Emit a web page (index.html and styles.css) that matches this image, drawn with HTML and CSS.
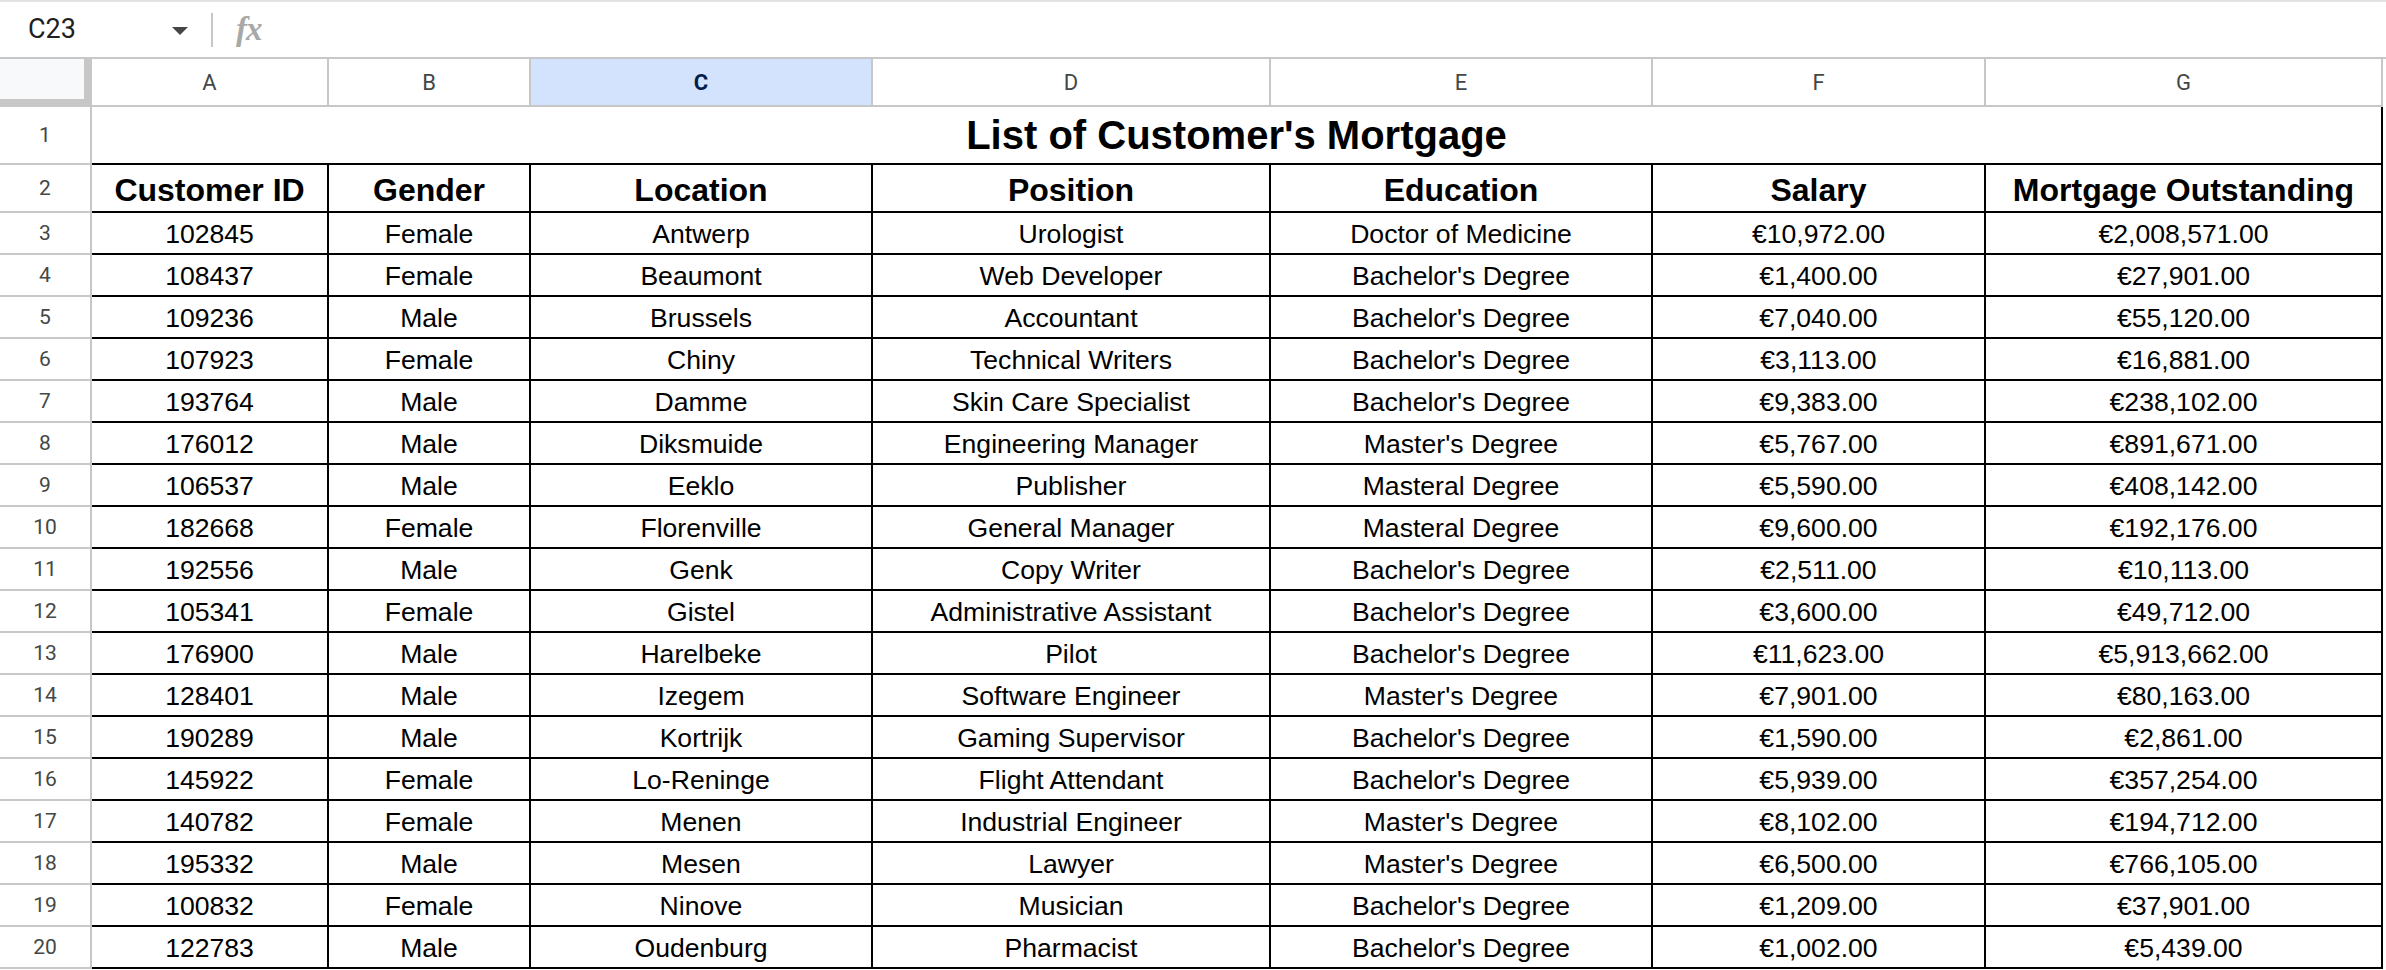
FILE: index.html
```html
<!DOCTYPE html>
<html>
<head>
<meta charset="utf-8">
<title>List of Customer's Mortgage</title>
<link rel="stylesheet" href="styles.css">
</head>
<body>
<div class="app">
  <div class="formula-bar">
    <div class="name-box">
      <span class="name-text">C23</span>
      <svg class="caret" width="16" height="8" viewBox="0 0 16 8"><path d="M0 0 L16 0 L8 8 Z" fill="#444746"/></svg>
    </div>
    <div class="fb-sep"></div>
    <span class="fx">fx</span>
  </div>

  <div class="sheet">
    <div class="row">
      <div class="corner"></div>
      <div class="ch">A</div><div class="ch">B</div><div class="ch sel">C</div><div class="ch">D</div><div class="ch">E</div><div class="ch">F</div><div class="ch">G</div>
    </div>
    <div class="row">
      <div class="rh">1</div>
      <div class="c title first">List of Customer's Mortgage</div>
    </div>
    <div class="row hdr">
      <div class="rh">2</div>
      <div class="c first">Customer ID</div><div class="c">Gender</div><div class="c">Location</div><div class="c">Position</div><div class="c">Education</div><div class="c">Salary</div><div class="c">Mortgage Outstanding</div>
    </div>
    <div class="row"><div class="rh">3</div><div class="c first">102845</div><div class="c">Female</div><div class="c">Antwerp</div><div class="c">Urologist</div><div class="c">Doctor of Medicine</div><div class="c">€10,972.00</div><div class="c">€2,008,571.00</div></div>
    <div class="row"><div class="rh">4</div><div class="c first">108437</div><div class="c">Female</div><div class="c">Beaumont</div><div class="c">Web Developer</div><div class="c">Bachelor's Degree</div><div class="c">€1,400.00</div><div class="c">€27,901.00</div></div>
    <div class="row"><div class="rh">5</div><div class="c first">109236</div><div class="c">Male</div><div class="c">Brussels</div><div class="c">Accountant</div><div class="c">Bachelor's Degree</div><div class="c">€7,040.00</div><div class="c">€55,120.00</div></div>
    <div class="row"><div class="rh">6</div><div class="c first">107923</div><div class="c">Female</div><div class="c">Chiny</div><div class="c">Technical Writers</div><div class="c">Bachelor's Degree</div><div class="c">€3,113.00</div><div class="c">€16,881.00</div></div>
    <div class="row"><div class="rh">7</div><div class="c first">193764</div><div class="c">Male</div><div class="c">Damme</div><div class="c">Skin Care Specialist</div><div class="c">Bachelor's Degree</div><div class="c">€9,383.00</div><div class="c">€238,102.00</div></div>
    <div class="row"><div class="rh">8</div><div class="c first">176012</div><div class="c">Male</div><div class="c">Diksmuide</div><div class="c">Engineering Manager</div><div class="c">Master's Degree</div><div class="c">€5,767.00</div><div class="c">€891,671.00</div></div>
    <div class="row"><div class="rh">9</div><div class="c first">106537</div><div class="c">Male</div><div class="c">Eeklo</div><div class="c">Publisher</div><div class="c">Masteral Degree</div><div class="c">€5,590.00</div><div class="c">€408,142.00</div></div>
    <div class="row"><div class="rh">10</div><div class="c first">182668</div><div class="c">Female</div><div class="c">Florenville</div><div class="c">General Manager</div><div class="c">Masteral Degree</div><div class="c">€9,600.00</div><div class="c">€192,176.00</div></div>
    <div class="row"><div class="rh">11</div><div class="c first">192556</div><div class="c">Male</div><div class="c">Genk</div><div class="c">Copy Writer</div><div class="c">Bachelor's Degree</div><div class="c">€2,511.00</div><div class="c">€10,113.00</div></div>
    <div class="row"><div class="rh">12</div><div class="c first">105341</div><div class="c">Female</div><div class="c">Gistel</div><div class="c">Administrative Assistant</div><div class="c">Bachelor's Degree</div><div class="c">€3,600.00</div><div class="c">€49,712.00</div></div>
    <div class="row"><div class="rh">13</div><div class="c first">176900</div><div class="c">Male</div><div class="c">Harelbeke</div><div class="c">Pilot</div><div class="c">Bachelor's Degree</div><div class="c">€11,623.00</div><div class="c">€5,913,662.00</div></div>
    <div class="row"><div class="rh">14</div><div class="c first">128401</div><div class="c">Male</div><div class="c">Izegem</div><div class="c">Software Engineer</div><div class="c">Master's Degree</div><div class="c">€7,901.00</div><div class="c">€80,163.00</div></div>
    <div class="row"><div class="rh">15</div><div class="c first">190289</div><div class="c">Male</div><div class="c">Kortrijk</div><div class="c">Gaming Supervisor</div><div class="c">Bachelor's Degree</div><div class="c">€1,590.00</div><div class="c">€2,861.00</div></div>
    <div class="row"><div class="rh">16</div><div class="c first">145922</div><div class="c">Female</div><div class="c">Lo-Reninge</div><div class="c">Flight Attendant</div><div class="c">Bachelor's Degree</div><div class="c">€5,939.00</div><div class="c">€357,254.00</div></div>
    <div class="row"><div class="rh">17</div><div class="c first">140782</div><div class="c">Female</div><div class="c">Menen</div><div class="c">Industrial Engineer</div><div class="c">Master's Degree</div><div class="c">€8,102.00</div><div class="c">€194,712.00</div></div>
    <div class="row"><div class="rh">18</div><div class="c first">195332</div><div class="c">Male</div><div class="c">Mesen</div><div class="c">Lawyer</div><div class="c">Master's Degree</div><div class="c">€6,500.00</div><div class="c">€766,105.00</div></div>
    <div class="row"><div class="rh">19</div><div class="c first">100832</div><div class="c">Female</div><div class="c">Ninove</div><div class="c">Musician</div><div class="c">Bachelor's Degree</div><div class="c">€1,209.00</div><div class="c">€37,901.00</div></div>
    <div class="row"><div class="rh">20</div><div class="c first">122783</div><div class="c">Male</div><div class="c">Oudenburg</div><div class="c">Pharmacist</div><div class="c">Bachelor's Degree</div><div class="c">€1,002.00</div><div class="c">€5,439.00</div></div>
  </div>
</div>
</body>
</html>
```

FILE: styles.css
```css
* { box-sizing: border-box; }

html, body {
  margin: 0;
  padding: 0;
  background: #ffffff;
  overflow: hidden;
}

.app {
  width: 2386px;
  height: 970px;
  overflow: hidden;
  font-family: "Liberation Sans", Arial, sans-serif;
  color: #000;
}

/* formula bar */
.formula-bar {
  height: 59px;
  border-top: 2px solid #e1e3e1;
  border-bottom: 2px solid #c7c7c7;
  display: flex;
  align-items: center;
}

.name-box {
  width: 211px;
  display: flex;
  align-items: center;
  padding-left: 28px;
  padding-right: 23px;
  justify-content: space-between;
}

.name-text {
  font-family: Roboto, "Liberation Sans", sans-serif;
  font-size: 27px;
  color: #1f1f1f;
  line-height: 1;
}

.caret { display: block; margin-top: 2px; }

.fb-sep {
  width: 2px;
  height: 34px;
  background: #c7c7c7;
}

.fx {
  margin-left: 23px;
  font-family: "Liberation Serif", serif;
  font-style: italic;
  font-weight: bold;
  font-size: 33px;
  color: #a8a8a8;
  letter-spacing: -1px;
  line-height: 1;
}

/* sheet grid */
.sheet {
  display: grid;
  grid-template-columns: 92px 237px 202px 342px 398px 382px 333px 397px;
  grid-template-rows: 48px 58px 48px repeat(18, 42px);
}

.row { display: contents; }

.corner {
  background: #f8f9fa;
  border-right: 8px solid #c7c7c7;
  border-bottom: 8px solid #c7c7c7;
}

.ch {
  display: flex;
  align-items: center;
  justify-content: center;
  border-right: 2px solid #c7c7c7;
  border-bottom: 2px solid #c7c7c7;
  font-family: Roboto, "Liberation Sans", sans-serif;
  font-size: 22px;
  color: #444746;
  background: #ffffff;
}

.ch.sel {
  background: #d3e3fd;
  color: #041e49;
  font-weight: bold;
}

.rh {
  display: flex;
  align-items: center;
  justify-content: center;
  border-right: 2px solid #c7c7c7;
  border-bottom: 2px solid #c7c7c7;
  font-family: Roboto, "Liberation Sans", sans-serif;
  font-size: 21px;
  color: #444746;
}

.c {
  display: flex;
  align-items: flex-end;
  justify-content: center;
  border-right: 2px solid #000;
  border-bottom: 2px solid #000;
  font-size: 26.6px;
  padding-bottom: 3px;
  white-space: nowrap;
  overflow: hidden;
}

.c.title {
  grid-column: 2 / span 7;
  font-size: 40px;
  font-weight: bold;
  padding-bottom: 5px;
}

.hdr .c {
  font-size: 32px;
  font-weight: bold;
  padding-bottom: 2px;
}
```
